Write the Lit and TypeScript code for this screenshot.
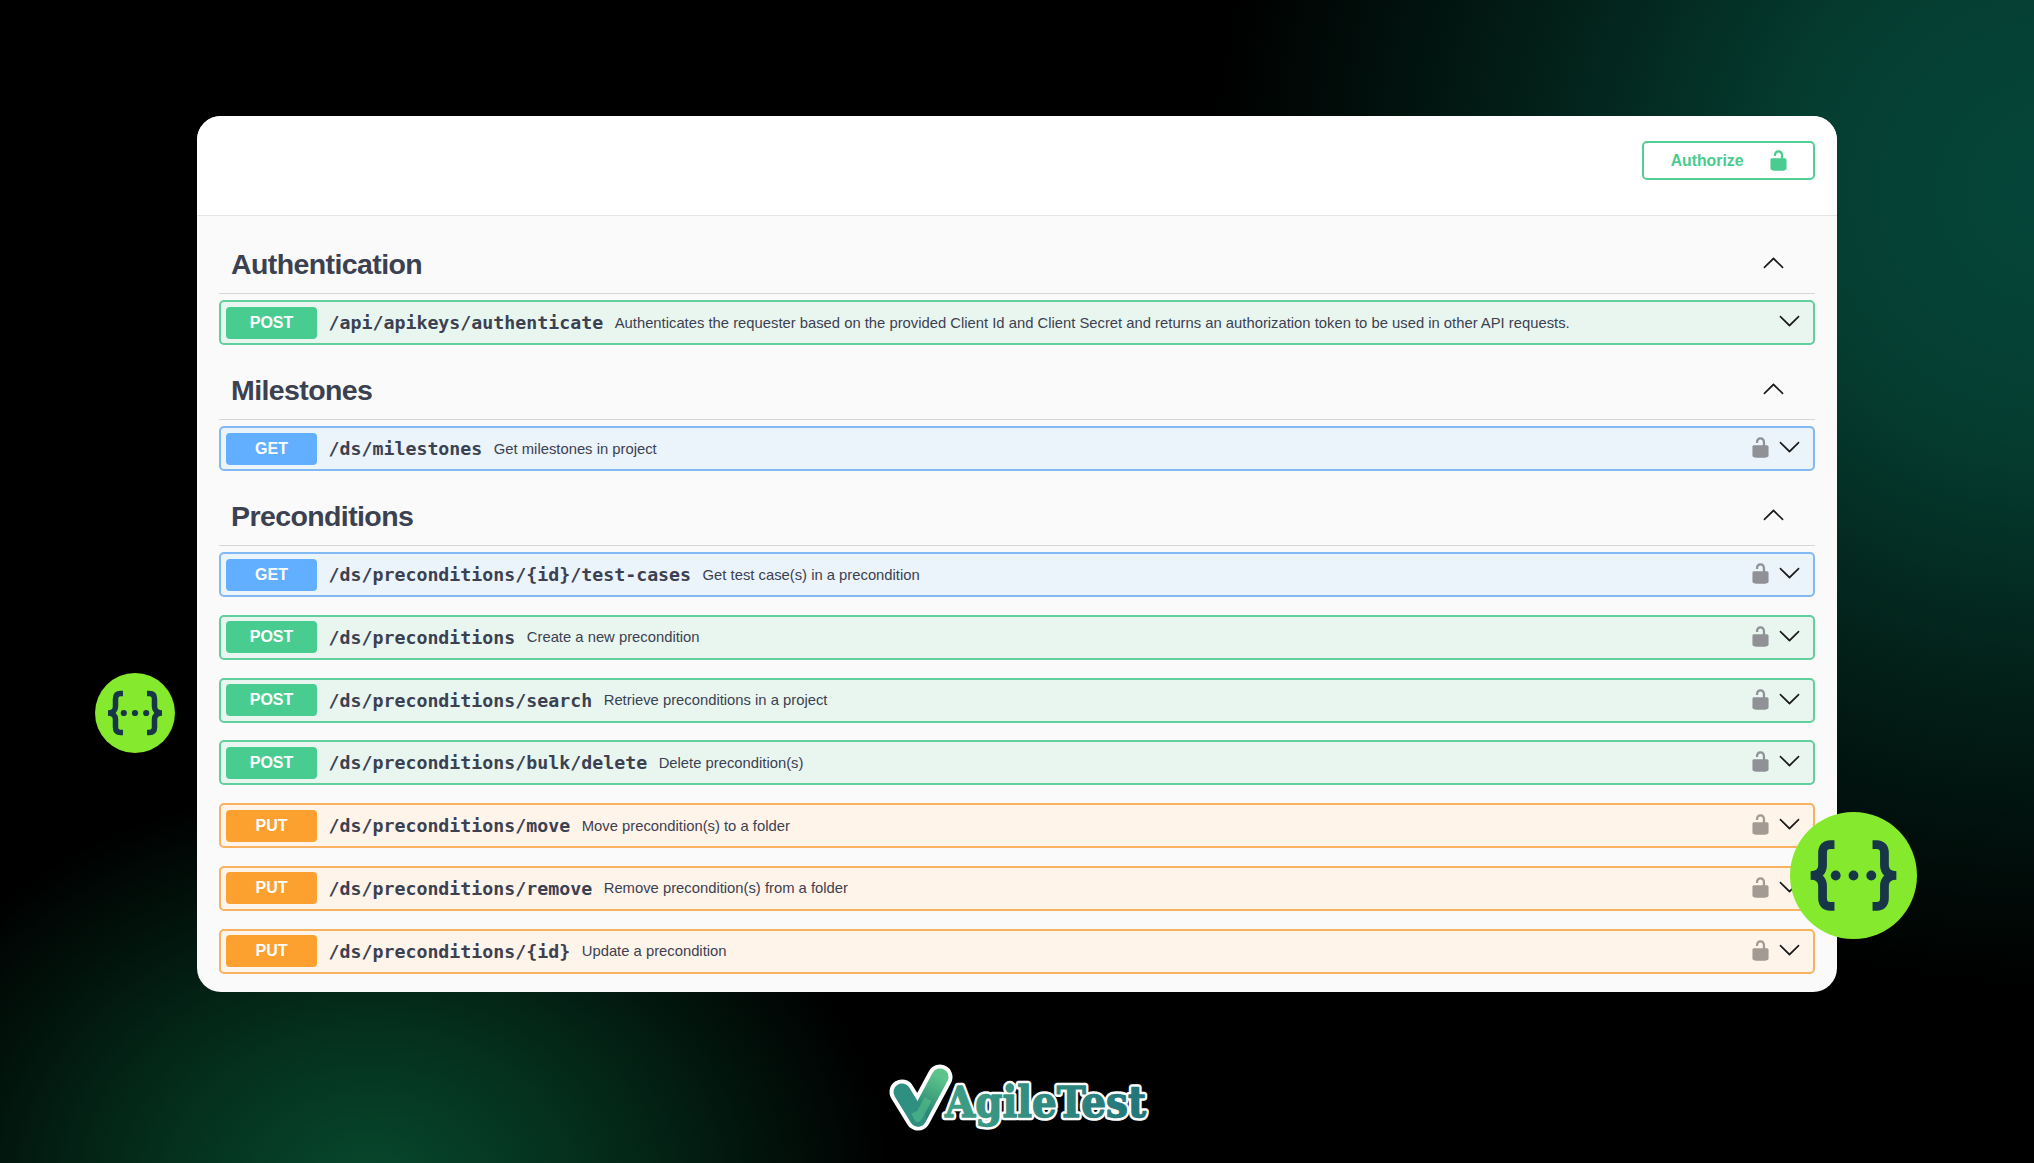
import { LitElement, html, css, svg } from "lit";
import { customElement } from "lit/decorators.js";

type Method = "post" | "get" | "put";
interface Op { m: Method; path: string; desc: string; lock: boolean; }
interface Group { title: string; ops: Op[]; }

const groups: Group[] = [
  { title: "Authentication", ops: [
    { m: "post", path: "/api/apikeys/authenticate", desc: "Authenticates the requester based on the provided Client Id and Client Secret and returns an authorization token to be used in other API requests.", lock: false },
  ]},
  { title: "Milestones", ops: [
    { m: "get", path: "/ds/milestones", desc: "Get milestones in project", lock: true },
  ]},
  { title: "Preconditions", ops: [
    { m: "get", path: "/ds/preconditions/{id}/test-cases", desc: "Get test case(s) in a precondition", lock: true },
    { m: "post", path: "/ds/preconditions", desc: "Create a new precondition", lock: true },
    { m: "post", path: "/ds/preconditions/search", desc: "Retrieve preconditions in a project", lock: true },
    { m: "post", path: "/ds/preconditions/bulk/delete", desc: "Delete precondition(s)", lock: true },
    { m: "put", path: "/ds/preconditions/move", desc: "Move precondition(s) to a folder", lock: true },
    { m: "put", path: "/ds/preconditions/remove", desc: "Remove precondition(s) from a folder", lock: true },
    { m: "put", path: "/ds/preconditions/{id}", desc: "Update a precondition", lock: true },
  ]},
];

const lockIcon = html`<svg class="lock" viewBox="0 0 20 20"><path d="M15.8 8H14V5.6C14 2.703 12.665 1 10 1 7.334 1 6 2.703 6 5.6V6h2v-.801C8 3.754 8.797 3 10 3c1.203 0 2 .754 2 2.199V8H4c-.553 0-1 .646-1 1.199V17c0 .549.428 1.139.951 1.307l1.197.387C5.672 18.861 6.55 19 7.1 19h5.8c.549 0 1.428-.139 1.951-.307l1.196-.387c.524-.167.953-.757.953-1.306V9.199C17 8.646 16.352 8 15.8 8z"/></svg>`;
const arrow = (cls: string) => html`<svg class=${cls} viewBox="0 0 20 20"><path d="M17.418 6.109c.272-.268.709-.268.979 0s.271.701 0 .969l-7.908 7.83c-.27.268-.707.268-.979 0l-7.908-7.83c-.27-.268-.27-.701 0-.969.271-.268.709-.268.979 0L10 13.25l7.418-7.141z"/></svg>`;

const bracePath = "M28 20.500h-2.500c-3.500 0-5 2-5 5.500v7.500c0 3.800-2.500 6.500-7.500 6.500 5 0 7.500 2.700 7.500 6.500v7.500c0 3.500 1.500 5.500 5 5.500H28";
const swaggerMark = svg`<g fill="none" stroke="#173647" stroke-width="5.500" stroke-linejoin="bevel">
    <path d=${bracePath}/>
    <path d=${bracePath} transform="matrix(-1 0 0 1 80 0)"/>
  </g>
  <circle cx="28.800" cy="40" r="3.100" fill="#173647"/>
  <circle cx="40" cy="40" r="3.100" fill="#173647"/>
  <circle cx="51.200" cy="40" r="3.100" fill="#173647"/>`;

@customElement("app-root")
export class AppRoot extends LitElement {
  static styles = css`
    :host {
      display: block;
      position: relative;
      width: 2034px;
      height: 1163px;
      overflow: hidden;
      background:
        radial-gradient(850px 800px at 2060px 190px, #05463a 0%, #053e31 30%, rgba(3, 38, 29, 0.9) 60%, rgba(0, 0, 0, 0) 100%),
        radial-gradient(520px 410px at 370px 1190px, #07492e 0%, rgba(5, 56, 34, 0.85) 40%, rgba(0, 0, 0, 0) 100%),
        #000;
      font-family: "Liberation Sans", Arial, sans-serif;
      color: #3b4151;
    }
    .stage {
      display: flex;
      flex-direction: column;
      align-items: flex-start;
      padding: 116px 0 0 197px;
    }
    .card {
      width: 1640px;
      height: 876px;
      border-radius: 24px;
      background: #fafafa;
      overflow: hidden;
      box-sizing: border-box;
    }
    .top {
      height: 99.500px;
      box-sizing: border-box;
      background: #fff;
      border-bottom: 1.500px solid #e4e4e4;
      display: flex;
      justify-content: flex-end;
      align-items: flex-start;
      padding: 25px 22.500px 0 0;
    }
    .auth {
      width: 172.500px;
      height: 38.500px;
      box-sizing: border-box;
      border: 2.600px solid #52cd96;
      border-radius: 5px;
      display: flex;
      align-items: center;
      justify-content: flex-end;
      gap: 23px;
      padding-right: 23px;
      color: #49cc90;
      font-weight: 700;
      font-size: 15.800px;
    }
    .auth span { margin-top: 1px; }
    .auth .lock { width: 23px; height: 23px; fill: #49cc90; }
    .body { padding: 3.500px 22px 0 22px; }
    .group-head {
      height: 73.500px;
      box-sizing: content-box;
      border-bottom: 1.500px solid #d5d6d8;
      display: flex;
      align-items: flex-end;
      justify-content: space-between;
      padding: 0 30px 0 12px;
      margin-bottom: 6.500px;
    }
    .group-head h3 {
      margin: 0 0 12.500px;
      font-size: 28.500px;
      letter-spacing: -0.600px;
      font-weight: 700;
      line-height: 1.100;
    }
    .up { width: 23px; height: 23px; transform: rotate(180deg); fill: #1a1a1a; margin-bottom: 17.500px; }
    .row {
      height: 45px;
      box-sizing: border-box;
      border: 2px solid;
      border-radius: 5px;
      display: flex;
      align-items: center;
      padding: 0 12px 0 5px;
      margin-bottom: 17.750px;
    }
    .group:not(:last-child) .row:last-child { margin-bottom: 0; }
    .post { background: #e9f6f0; border-color: #62cf9f; }
    .get { background: #ebf3fb; border-color: #83b9f2; }
    .put { background: #fff4e9; border-color: #f8b261; }
    .badge {
      width: 91px;
      height: 32px;
      flex: none;
      border-radius: 4px;
      color: #fff;
      font-weight: 700;
      font-size: 16px;
      display: flex;
      align-items: center;
      justify-content: center;
    }
    .post .badge { background: #49cc90; }
    .get .badge { background: #61affe; }
    .put .badge { background: #fca130; }
    .path {
      margin-left: 11.500px;
      font-family: "DejaVu Sans Mono", monospace;
      font-weight: 700;
      font-size: 18.250px;
      white-space: nowrap;
    }
    .desc {
      margin-left: 11.500px;
      font-size: 14.800px;
      white-space: nowrap;
      flex: 1;
    }
    .lock { width: 23px; height: 23px; fill: #8f9196; flex: none; }
    .put .lock { fill: #a29a93; }
    .row .lock { margin-top: -2px; margin-right: 6.500px; }
    .down { width: 23px; height: 23px; fill: #1a1a1a; flex: none; margin-top: -4px; }
    .logo { display: block; width: 300px; height: 100px; margin: 44px 0 0 671px; }
    .logo text {
      font-family: "DejaVu Serif", serif;
      font-weight: 700;
      font-size: 42px;
      stroke-linejoin: round;
    }
    .logo .halo { fill: #fff; stroke: #fff; stroke-width: 6.500px; }
    .logo .face { fill: url(#tg); stroke: url(#tg); stroke-width: 1.400px; }
    .mark { position: absolute; border-radius: 50%; background: #85ea2d; }
    .mark svg { display: block; width: 100%; height: 100%; }
    .m1 { left: 95px; top: 673px; width: 80px; height: 80px; }
    .m2 { left: 1790px; top: 812px; width: 127px; height: 127px; }
  `;

  render() {
    return html`
      <div class="stage">
        <div class="card">
          <div class="top">
            <div class="auth"><span>Authorize</span>${lockIcon}</div>
          </div>
          <div class="body">
            ${groups.map(g => html`
              <div class="group">
                <div class="group-head"><h3>${g.title}</h3>${arrow("up")}</div>
                ${g.ops.map(o => html`
                  <div class="row ${o.m}">
                    <span class="badge">${o.m.toUpperCase()}</span>
                    <span class="path">${o.path}</span>
                    <span class="desc">${o.desc}</span>
                    ${o.lock ? lockIcon : ""}
                    ${arrow("down")}
                  </div>`)}
              </div>`)}
          </div>
        </div>
        <svg class="logo" viewBox="0 0 300 100">
          <defs>
            <linearGradient id="vg2" gradientUnits="userSpaceOnUse" x1="50" y1="82" x2="72" y2="41">
              <stop offset="0" stop-color="#1f7a72"/><stop offset="1" stop-color="#5cc48a"/>
            </linearGradient>
            <linearGradient id="tg" gradientUnits="userSpaceOnUse" x1="76" y1="0" x2="276" y2="0">
              <stop offset="0" stop-color="#3f9f86"/><stop offset="1" stop-color="#22757a"/>
            </linearGradient>
          </defs>
          <path d="M34 56 L50 82 L72 41" fill="none" stroke="#fff" stroke-width="25" stroke-linecap="round" stroke-linejoin="round"/>
          <path d="M72 41 L50 82" fill="none" stroke="url(#vg2)" stroke-width="17" stroke-linecap="round"/>
          <path d="M34 56 L50 82" fill="none" stroke="#2f8f80" stroke-width="17" stroke-linecap="round"/>
          <path d="M47 76 L50 82 L60 63" fill="none" stroke="#57bf88" stroke-width="8" stroke-linejoin="round" opacity="0.6"/>
          <text class="halo" x="77" y="81" textLength="201" lengthAdjust="spacingAndGlyphs" aria-hidden="true">AgileTest</text>
          <text class="face" x="77" y="81" textLength="201" lengthAdjust="spacingAndGlyphs">AgileTest</text>
        </svg>
      </div>
      <div class="mark m1"><svg viewBox="0 0 80 80">${swaggerMark}</svg></div>
      <div class="mark m2"><svg viewBox="0 0 80 80">${swaggerMark}</svg></div>
    `;
  }
}
